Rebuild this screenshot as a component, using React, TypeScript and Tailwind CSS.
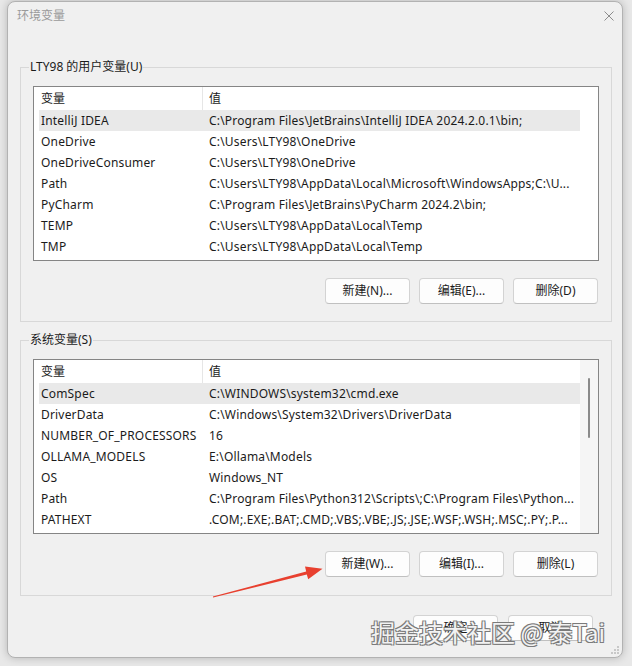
import React from "react";

type Row = [string, string];

const userVars: Row[] = [
  ["IntelliJ IDEA", "C:\\Program Files\\JetBrains\\IntelliJ IDEA 2024.2.0.1\\bin;"],
  ["OneDrive", "C:\\Users\\LTY98\\OneDrive"],
  ["OneDriveConsumer", "C:\\Users\\LTY98\\OneDrive"],
  ["Path", "C:\\Users\\LTY98\\AppData\\Local\\Microsoft\\WindowsApps;C:\\U..."],
  ["PyCharm", "C:\\Program Files\\JetBrains\\PyCharm 2024.2\\bin;"],
  ["TEMP", "C:\\Users\\LTY98\\AppData\\Local\\Temp"],
  ["TMP", "C:\\Users\\LTY98\\AppData\\Local\\Temp"],
];

const systemVars: Row[] = [
  ["ComSpec", "C:\\WINDOWS\\system32\\cmd.exe"],
  ["DriverData", "C:\\Windows\\System32\\Drivers\\DriverData"],
  ["NUMBER_OF_PROCESSORS", "16"],
  ["OLLAMA_MODELS", "E:\\Ollama\\Models"],
  ["OS", "Windows_NT"],
  ["Path", "C:\\Program Files\\Python312\\Scripts\\;C:\\Program Files\\Python..."],
  ["PATHEXT", ".COM;.EXE;.BAT;.CMD;.VBS;.VBE;.JS;.JSE;.WSF;.WSH;.MSC;.PY;.P..."],
];

function Btn({ children }: { children: React.ReactNode }) {
  return (
    <button className="h-[26px] w-[85px] rounded-[4px] border border-[#d3d3d3] border-b-[#c0c0c0] bg-[#fdfdfd] text-[12px] text-[#1b1b1b]">
      {children}
    </button>
  );
}

function VarList({ rows, scrollbar }: { rows: Row[]; scrollbar?: boolean }) {
  return (
    <div className="mt-[10px] flex h-[175px] overflow-hidden border border-[#858585] bg-white">
      <div className="flex-1 overflow-hidden pl-[5px]">
        <div className="flex h-[23px] items-center text-[12px] text-[#1b1b1b]">
          <div className="w-[163px] pl-[2px]">变量</div>
          <div className="flex h-full flex-1 items-center border-l border-[#e6e6e6] pl-[6px]">值</div>
        </div>
        {rows.map(([name, value], i) => (
          <div
            key={name + i}
            className={`flex h-[21px] items-center whitespace-nowrap pt-[1px] text-[12px] tracking-[0.18px] text-[#1b1b1b] ${i === 0 ? "bg-[#e9e9e9]" : ""}`}
          >
            <div className="w-[163px] overflow-hidden pl-[2px]">{name}</div>
            <div className="flex-1 overflow-hidden pl-[7px]">{value}</div>
          </div>
        ))}
      </div>
      <div className={`relative w-[18px] ${scrollbar ? "bg-[#f5f5f5]" : "bg-white"}`}>
        {scrollbar && (
          <div className="absolute left-[8px] top-[18px] h-[60px] w-[2px] rounded-full bg-[#8a8a8a]" />
        )}
      </div>
    </div>
  );
}

function Group({
  label,
  rows,
  scrollbar,
  buttons,
  className,
}: {
  label: string;
  rows: Row[];
  scrollbar?: boolean;
  buttons: string[];
  className: string;
}) {
  return (
    <fieldset className={`ml-[12px] w-[592px] border border-[#d8d8d8] px-[12px] ${className}`}>
      <legend className="ml-[-4px] px-[1px] text-[12px] leading-[18px] text-[#1b1b1b]">{label}</legend>
      <VarList rows={rows} scrollbar={scrollbar} />
      <div className="mt-[17px] flex justify-end gap-[9px] pr-[1px]">
        {buttons.map((b) => (
          <Btn key={b}>{b}</Btn>
        ))}
      </div>
    </fieldset>
  );
}

export default function App() {
  return (
    <div
      className="relative h-[666px] w-[632px] overflow-hidden bg-[#e8e8e8] pt-[1px]"
      style={{ fontFamily: '"Noto Sans", "Noto Sans CJK SC", sans-serif' }}
    >
      <div className="relative ml-[7px] flex h-[657px] w-[616px] flex-col rounded-[8px] border border-[#b2b2b2] bg-[#f0f0f0] shadow-[0_0_8px_rgba(0,0,0,0.22)]">
        <div className="flex h-[28px] items-center justify-between pl-[9px] pr-[8px]">
          <span className="text-[12px] text-[#9a9a9a]">环境变量</span>
          <svg width="10" height="10" viewBox="0 0 10 10">
            <path d="M0.5 0.5 L9.5 9.5 M9.5 0.5 L0.5 9.5" stroke="#8c8c8c" strokeWidth="1" />
          </svg>
        </div>

        <Group
          label="LTY98 的用户变量(U)"
          rows={userVars}
          buttons={["新建(N)...", "编辑(E)...", "删除(D)"]}
          className="mt-[28px] pb-[17px]"
        />

        <Group
          label="系统变量(S)"
          rows={systemVars}
          scrollbar
          buttons={["新建(W)...", "编辑(I)...", "删除(L)"]}
          className="mt-[9px] pb-[18px]"
        />

        <div className="mr-[29px] mt-[19px] flex justify-end gap-[10px]">
          <Btn>确定</Btn>
          <Btn>取消</Btn>
        </div>

        <svg className="absolute bottom-[2px] right-[2px]" width="10" height="10" viewBox="0 0 10 10">
          {[
            [8, 2],
            [5, 5],
            [8, 5],
            [2, 8],
            [5, 8],
            [8, 8],
          ].map(([x, y]) => (
            <rect key={`${x}-${y}`} x={x - 0.75} y={y - 0.75} width="1.5" height="1.5" fill="#a8a8a8" />
          ))}
        </svg>
      </div>

      {/* red annotation arrow */}
      <svg className="pointer-events-none absolute left-0 top-0" width="632" height="666" viewBox="0 0 632 666">
        <polygon
          points="212.9,596.6 306.2,571.4 305,566.6 322.5,568.8 308.2,579.2 306.8,574.6 213.1,597.5"
          fill="#e8402f"
        />
      </svg>

      {/* watermark */}
      <div
        className="pointer-events-none absolute left-[371px] top-[617px] whitespace-nowrap text-[24px] leading-[30px] text-[#f2f2f2] [text-shadow:1px_1px_0_#7a7a7a,-1px_-1px_0_#7a7a7a,1px_-1px_0_#7a7a7a,-1px_1px_0_#7a7a7a]"
        style={{ fontFamily: '"Noto Sans CJK SC", "Noto Sans", sans-serif' }}
      >
        掘金技术社区 @ 泰Tai
      </div>
    </div>
  );
}
